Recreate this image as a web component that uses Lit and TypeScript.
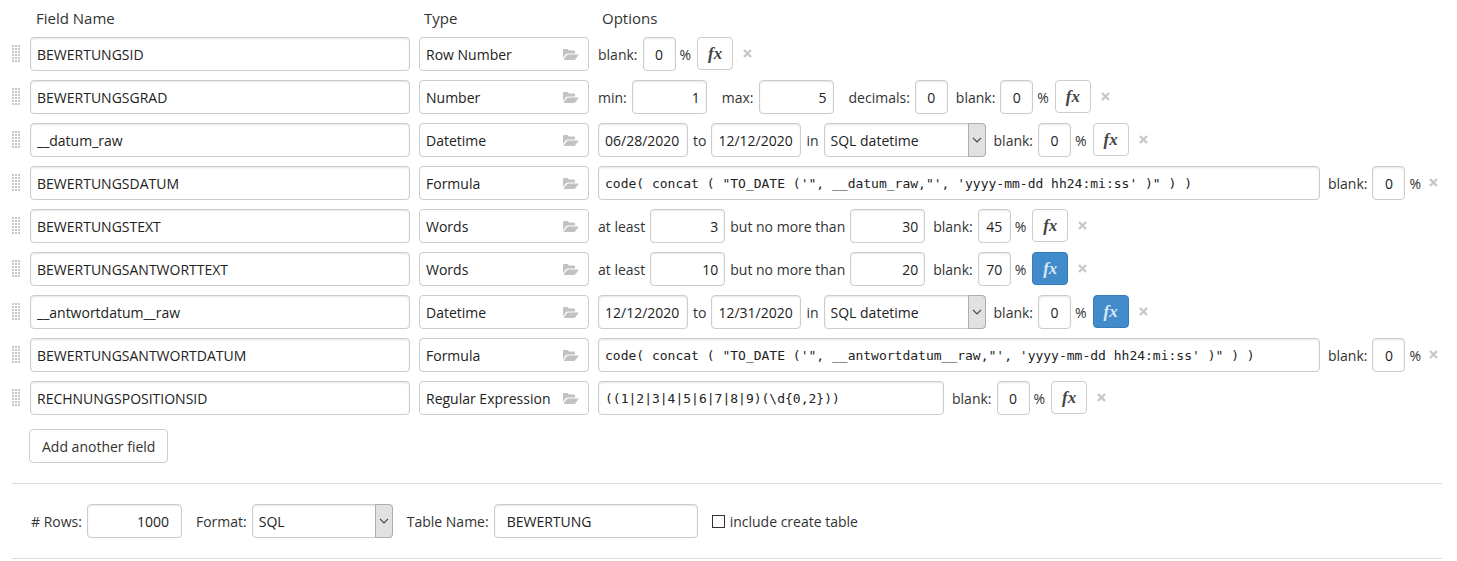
import { LitElement, html, css, svg, nothing, TemplateResult } from "lit";
import { customElement, property, state } from "lit/decorators.js";
import { classMap } from "lit/directives/class-map.js";

type Kind = "rownum" | "number" | "datetime" | "formula" | "words" | "regex";

interface Field {
  name: string;
  type: string;
  kind: Kind;
  values: string[];
  blank: string;
  active?: boolean;
}

const FIELDS: Field[] = [
  { name: "BEWERTUNGSID", type: "Row Number", kind: "rownum", values: [], blank: "0" },
  { name: "BEWERTUNGSGRAD", type: "Number", kind: "number", values: ["1", "5", "0"], blank: "0" },
  { name: "__datum_raw", type: "Datetime", kind: "datetime", values: ["06/28/2020", "12/12/2020"], blank: "0" },
  {
    name: "BEWERTUNGSDATUM", type: "Formula", kind: "formula", blank: "0",
    values: [`code( concat ( "TO_DATE ('", __datum_raw,"', 'yyyy-mm-dd hh24:mi:ss' )" ) )`],
  },
  { name: "BEWERTUNGSTEXT", type: "Words", kind: "words", values: ["3", "30"], blank: "45" },
  { name: "BEWERTUNGSANTWORTTEXT", type: "Words", kind: "words", values: ["10", "20"], blank: "70", active: true },
  { name: "__antwortdatum__raw", type: "Datetime", kind: "datetime", values: ["12/12/2020", "12/31/2020"], blank: "0", active: true },
  {
    name: "BEWERTUNGSANTWORTDATUM", type: "Formula", kind: "formula", blank: "0",
    values: [`code( concat ( "TO_DATE ('", __antwortdatum__raw,"', 'yyyy-mm-dd hh24:mi:ss' )" ) )`],
  },
  { name: "RECHNUNGSPOSITIONSID", type: "Regular Expression", kind: "regex", values: ["((1|2|3|4|5|6|7|8|9)(\\d{0,2}))"], blank: "0" },
];

const controls = css`
  * {
    box-sizing: border-box;
  }
  input,
  select,
  button {
    font: inherit;
    color: #222;
    margin: 0;
  }
  .box {
    height: 34px;
    min-width: 0;
    padding: 0 6px;
    border: 1px solid #ccc;
    border-radius: 4px;
    background: #fff;
    box-shadow: inset 0 1px 2px rgba(0, 0, 0, 0.1);
    outline: none;
  }
  .box:focus {
    border-color: #66afe9;
  }
  .select {
    display: grid;
    align-items: center;
  }
  .select select,
  .select .arrow {
    grid-area: 1 / 1;
  }
  .select select {
    appearance: none;
    width: 100%;
    padding: 2px 20px 0 6px;
  }
  .arrow {
    justify-self: end;
    display: flex;
    align-items: center;
    justify-content: center;
    width: 18px;
    height: 34px;
    border: 1px solid #adadad;
    border-radius: 0 4px 4px 0;
    background: #e1e1e1;
    pointer-events: none;
  }
`;

const arrow = html`<span class="arrow">
  <svg width="10" height="6" viewBox="0 0 10 6" fill="none" stroke="#444" stroke-width="1.2">
    <path d="M1 0.8 5 4.8 9 0.8" />
  </svg>
</span>`;

const dots = Array.from({ length: 18 }, (_, i) => [(i % 3) * 3, Math.floor(i / 3) * 3]);

@customElement("field-row")
export class FieldRow extends LitElement {
  @property({ attribute: false }) field!: Field;

  static styles = [
    controls,
    css`
      :host {
        display: grid;
        grid-template-columns: 9px 380px 170px minmax(0, 1fr);
        column-gap: 9px;
        align-items: center;
      }
      .handle {
        display: block;
        margin-bottom: 1px;
        cursor: move;
      }
      .type {
        display: flex;
        align-items: center;
        justify-content: space-between;
        padding: 2px 9px 0 6px;
        box-shadow: none;
        cursor: pointer;
      }
      .options {
        display: flex;
        align-items: center;
        white-space: nowrap;
      }
      label,
      .unit {
        padding-top: 2px;
      }
      .options .box,
      .options .select {
        flex: none;
      }
      label + .box,
      label + .select {
        margin-left: 5px;
      }
      .box + label {
        margin-left: 5px;
      }
      .options .next {
        margin-left: 15px;
      }
      .options .blank {
        margin-left: 8px;
      }
      .options .blank:first-child {
        margin-left: 0;
      }
      .num {
        width: 75px;
        text-align: right;
      }
      .small {
        width: 33px;
        padding-left: 0;
        padding-right: 0;
        text-align: center;
      }
      .date {
        width: 90px;
      }
      .format {
        width: 162px;
      }
      .code {
        font: 13px "DejaVu Sans Mono", monospace;
      }
      .options .formula {
        flex: 1 1 0;
      }
      .regex {
        width: 346px;
      }
      .unit {
        margin-left: 4px;
      }
      .unit + .remove {
        margin-left: 4px;
      }
      .fx {
        width: 36px;
        height: 33px;
        margin: 0 6px 1px;
        padding: 0;
        border: 1px solid #ccc;
        border-radius: 4px;
        background: #fff;
        color: #444;
        font: italic bold 17px/30px "Liberation Serif", serif;
        cursor: pointer;
      }
      .fx.active {
        border-color: #357ebd;
        background: #428bca;
        color: #d9e8f5;
      }
      .remove {
        display: flex;
        padding: 4px;
        margin: 0 0 1px 0;
        border: 0;
        background: none;
        cursor: pointer;
      }
    `,
  ];

  private input(id: string, value: string, cls: string) {
    return html`<input id=${id} class="box ${cls}" type="text" .value=${value} />`;
  }

  private settings(): TemplateResult | typeof nothing {
    const { kind, values: v } = this.field;
    switch (kind) {
      case "number":
        return html`<label for="min">min:</label>${this.input("min", v[0], "num")}
          <label for="max" class="next">max:</label>${this.input("max", v[1], "num")}
          <label for="dec" class="next">decimals:</label>${this.input("dec", v[2], "small")}`;
      case "datetime":
        return html`<input id="from" class="box date" type="text" aria-label="from" .value=${v[0]} />
          <label for="to">to</label>${this.input("to", v[1], "date")}
          <label for="format">in</label>
          <span class="select format">
            <select id="format" class="box"><option>SQL datetime</option></select>${arrow}
          </span>`;
      case "words":
        return html`<label for="min">at least</label>${this.input("min", v[0], "num")}
          <label for="max">but no more than</label>${this.input("max", v[1], "num")}`;
      case "formula":
      case "regex":
        return html`<input class="box code ${kind}" type="text" aria-label=${this.field.type} .value=${v[0]} />`;
      default:
        return nothing;
    }
  }

  private toggle() {
    this.field = { ...this.field, active: !this.field.active };
  }

  render() {
    const f = this.field;
    return html`
      <svg class="handle" width="8" height="17" viewBox="0 0 8 17" fill="#c8c8c8" shape-rendering="crispEdges">
        ${dots.map(([x, y]) => svg`<rect x=${x} y=${y} width="2" height="2" />`)}
      </svg>
      <input class="box" type="text" aria-label="Field Name" .value=${f.name} />
      <button class="box type" type="button">
        <span>${f.type}</span>
        <svg width="16" height="12" viewBox="0 0 16 12" fill="#c2c2c2">
          <path d="M0 9.6V1.3Q0 0 1.3 0H4.2Q5.5 0 5.5 1.3V1.6H10.8Q12.1 1.6 12.1 2.9V4.4H5.2Q3.6 4.4 2.5 5.6L0 9.6Z" />
          <path d="M15.4 6.3 12.8 9.8Q12 11 10.6 11H1.2Q.4 11 .8 10.3L3.4 6.7Q4.2 5.6 5.6 5.6H15Q15.9 5.6 15.4 6.3Z" />
        </svg>
      </button>
      <div class="options">
        ${this.settings()}
        <label for="blank" class="blank">blank:</label>${this.input("blank", f.blank, "small")}
        <span class="unit">%</span>
        ${f.kind === "formula"
          ? nothing
          : html`<button type="button" class=${classMap({ fx: true, active: !!f.active })} @click=${this.toggle}>fx</button>`}
        <button type="button" class="remove" aria-label="Remove field">
          <svg width="9" height="9" viewBox="0 0 9 9" stroke="#c8c8c8" stroke-width="2.4">
            <path d="M1 1 8 8M8 1 1 8" />
          </svg>
        </button>
      </div>
    `;
  }
}

@customElement("app-root")
export class AppRoot extends LitElement {
  @state() private fields = FIELDS;

  static styles = [
    controls,
    css`
      :host {
        display: block;
        padding: 8px 15px 0 12px;
        background: #fff;
        color: #333;
        font: 14px/20px "Open Sans", "Noto Sans", sans-serif;
      }
      .head {
        display: grid;
        grid-template-columns: 388px 178px minmax(0, 1fr);
        padding-left: 24px;
        font-size: 15px;
        line-height: 21px;
      }
      .fields {
        display: grid;
        row-gap: 9px;
        margin: 8px 0 14px;
      }
      .add {
        height: 34px;
        margin-left: 17px;
        padding: 1px 12px 0;
        border: 1px solid #ccc;
        border-radius: 4px;
        background: #fff;
        color: #333;
        cursor: pointer;
      }
      .output {
        display: flex;
        align-items: center;
        margin-top: 20px;
        padding: 20px 0 20px 19px;
        border: solid #ddd;
        border-width: 1px 0;
      }
      .item {
        display: flex;
        align-items: center;
        gap: 5px;
        margin-right: 14px;
      }
      label {
        padding-top: 1px;
      }
      .rows {
        width: 95px;
        padding: 0 12px;
        text-align: right;
      }
      .format {
        width: 141px;
      }
      .table-name {
        width: 204px;
        padding: 0 12px;
      }
      .check {
        appearance: none;
        width: 13px;
        height: 13px;
        border: 1px solid #333;
        background: #fff;
      }
      .check:checked {
        background: #333;
      }
      .check + label {
        padding-top: 2px;
      }
    `,
  ];

  private add() {
    this.fields = [...this.fields, { name: "", type: "Row Number", kind: "rownum", values: [], blank: "0" }];
  }

  render() {
    return html`
      <div class="head"><span>Field Name</span><span>Type</span><span>Options</span></div>
      <div class="fields">${this.fields.map((f) => html`<field-row .field=${f}></field-row>`)}</div>
      <button type="button" class="add" @click=${this.add}>Add another field</button>
      <div class="output">
        <div class="item">
          <label for="rows"># Rows:</label>
          <input id="rows" class="box rows" type="text" value="1000" />
        </div>
        <div class="item">
          <label for="format">Format:</label>
          <span class="select format">
            <select id="format" class="box"><option>SQL</option></select>${arrow}
          </span>
        </div>
        <div class="item">
          <label for="table">Table Name:</label>
          <input id="table" class="box table-name" type="text" value="BEWERTUNG" />
        </div>
        <div class="item">
          <input id="create" class="check" type="checkbox" />
          <label for="create">include create table</label>
        </div>
      </div>
    `;
  }
}
